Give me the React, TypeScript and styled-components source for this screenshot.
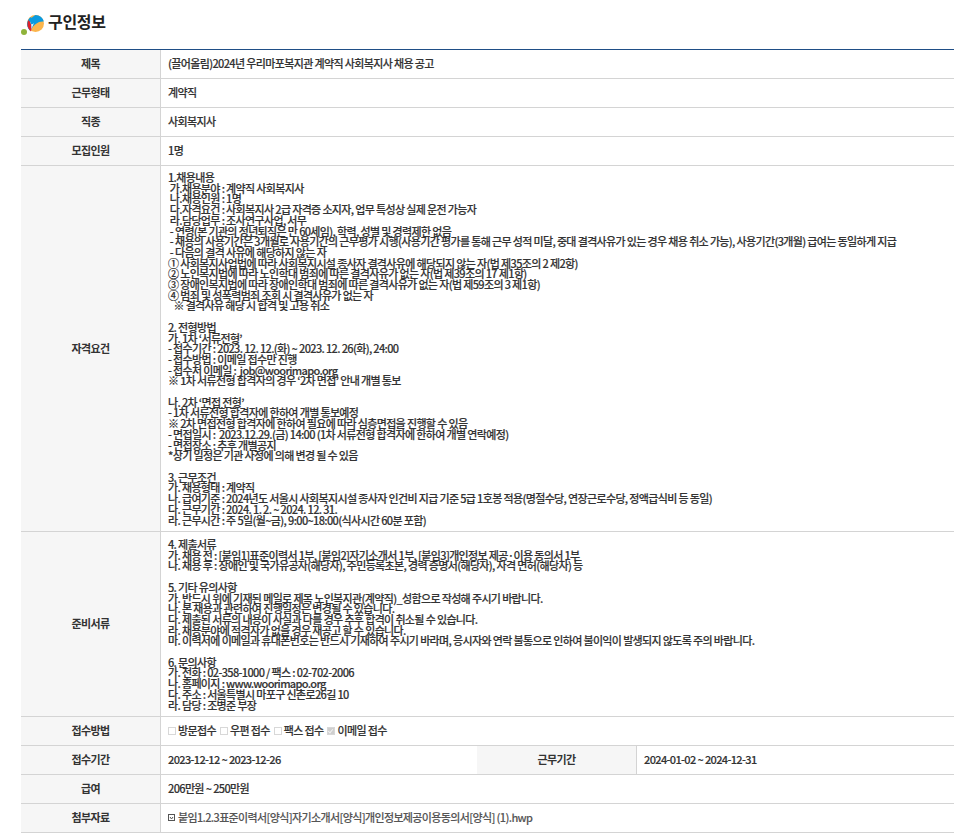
import React from 'react';
import styled, { createGlobalStyle } from 'styled-components';

const GlobalStyle = createGlobalStyle`
  html, body {
    margin: 0;
    padding: 0;
    background: #ffffff;
  }
  body {
    font-family: "Noto Sans CJK KR", "Noto Sans", sans-serif;
    color: #333333;
  }
`;

const Page = styled.div`
  width: 976px;
  height: 833px;
  overflow: hidden;
  padding: 0 22px 0 21px;
  box-sizing: border-box;
`;

const Heading = styled.div`
  display: flex;
  align-items: flex-start;
  gap: 4px;
  height: 49px;
  padding-top: 10px;
  box-sizing: border-box;
`;

const LogoMark = styled.svg`
  margin-top: 5px;
  flex-shrink: 0;
`;

const HeadingText = styled.h2`
  margin: 0;
  font-size: 16px;
  font-weight: 700;
  line-height: 22px;
  letter-spacing: -0.3px;
  color: #222222;
`;

const Row = styled.div<{ $top?: boolean }>`
  display: grid;
  grid-template-columns: 140px 1fr;
  border-bottom: 1px solid #d4d4d4;
  ${({ $top }) => $top && 'border-top: 1px solid #1f4e86;'}
`;

const SplitRow = styled.div`
  display: grid;
  grid-template-columns: 140px 316px 160px 1fr;
  border-bottom: 1px solid #d4d4d4;
`;

const Label = styled.div`
  display: flex;
  align-items: center;
  justify-content: center;
  padding-bottom: 2px;
  box-sizing: border-box;
  background: #f6f6f6;
  border-right: 1px solid #d4d4d4;
  font-size: 11px;
  font-weight: 700;
  letter-spacing: -0.64px;
  color: #333333;
`;

const Value = styled.div`
  display: flex;
  align-items: center;
  gap: 4px;
  height: 28px;
  padding: 0 0 2px 7px;
  box-sizing: border-box;
  font-size: 11px;
  font-weight: 500;
  letter-spacing: -0.64px;
  -webkit-text-stroke: 0.15px #333333;
  color: #333333;
  white-space: nowrap;
`;

const Body = styled.div<{ $height: number; $offset: number }>`
  height: ${({ $height }) => $height}px;
  padding: ${({ $offset }) => $offset}px 0 0 7px;
  box-sizing: border-box;
  font-size: 11px;
  font-weight: 500;
  line-height: 10.7px;
  letter-spacing: -0.65px;
  -webkit-text-stroke: 0.15px #333333;
  white-space: pre;
  color: #333333;
  overflow: hidden;
`;

const Check = styled.span<{ $on?: boolean }>`
  position: relative;
  display: inline-block;
  width: 8px;
  height: 8px;
  box-sizing: border-box;
  border: 1px solid #d8d8d8;
  background: ${({ $on }) => ($on ? '#cfcfcf' : '#ffffff')};
  margin: 1px -2px 0 0;
  ${({ $on }) =>
    $on &&
    `&::after {
      content: "";
      position: absolute;
      left: 1px;
      top: 0;
      width: 2px;
      height: 4px;
      border: solid #f2f2f2;
      border-width: 0 1px 1px 0;
      transform: rotate(40deg);
    }`}
`;

const FileGlyph = styled.svg`
  margin-right: -1px;
  flex-shrink: 0;
`;

const FileName = styled.span`
  color: #555555;
  -webkit-text-stroke: 0.1px #555555;
`;

const requirements = `1.채용내용
 가.채용분야 : 계약직 사회복지사
 나.채용인원 : 1명
 다.자격요건 : 사회복지사 2급 자격증 소지자, 업무 특성상 실제 운전 가능자
 라.담당업무 : 조사연구사업, 서무
 - 연령(본 기관의 정년퇴직은 만 60세임), 학력, 성별 및 경력제한 없음
 - 채용의 사용기간은 3개월로 사용기간의 근무평가 시행(사용기간 평가를 통해 근무 성적 미달, 중대 결격사유가 있는 경우 채용 취소 가능), 사용기간(3개월) 급여는 동일하게 지급
 - 다음의 결격 사유에 해당하지 않는 자
① 사회복지사업법에 따라 사회복지시설 종사자 결격사유에 해당되지 않는 자(법 제35조의 2 제2항)
② 노인복지법에 따라 노인학대 범죄에 따른 결격사유가 없는 자(법 제39조의 17 제1항)
③ 장애인복지법에 따라 장애인학대 범죄에 따른 결격사유가 없는 자(법 제59조의 3 제1항)
④ 범죄 및 성폭력범죄 조회 시 결격사유가 없는 자
   ※ 결격사유 해당 시 합격 및 고용 취소

2. 전형방법
가. 1차 ‘서류전형’
- 접수기간 : 2023. 12. 12.(화) ~ 2023. 12. 26(화), 24:00
- 접수방법 : 이메일 접수만 진행
- 접수처 이메일 :  job@woorimapo.org
※ 1차 서류전형 합격자의 경우 ‘2차 면접’ 안내 개별 통보

나. 2차 ‘면접 전형’
- 1차 서류전형 합격자에 한하여 개별 통보예정
※ 2차 면접전형 합격자에 한하여 필요에 따라 심층면접을 진행할 수 있음
- 면접일시 :  2023.12.29.(금) 14:00 (1차 서류전형 합격자에 한하여 개별 연락예정)
- 면접장소 : 추후 개별공지
*상기 일정은 기관 사정에 의해 변경 될 수 있음

3. 근무조건
가. 채용형태 : 계약직
나. 급여기준 : 2024년도 서울시 사회복지시설 종사자 인건비 지급 기준 5급 1호봉 적용(명절수당, 연장근로수당, 정액급식비 등 동일)
다. 근무기간 : 2024. 1. 2. ~ 2024. 12. 31.
라. 근무시간 : 주 5일(월~금), 9:00~18:00(식사시간 60분 포함)`;

const documents = `4. 제출서류
가. 채용 전 : [붙임1]표준이력서 1부, [붙임2]자기소개서 1부, [붙임3]개인정보 제공·이용 동의서 1부
나. 채용 후 : 장애인 및 국가유공자(해당자), 주민등록초본, 경력 증명서(해당자), 자격 면허(해당자) 등

5. 기타 유의사항
가. 반드시 위에 기재된 메일로 제목 노인복지관(계약직)_성함으로 작성해 주시기 바랍니다.
나. 본 채용과 관련하여 진행일정은 변경될 수 있습니다.
다. 제출된 서류의 내용이 사실과 다를 경우 추후 합격이 취소될 수 있습니다.
라. 채용분야에 적격자가 없을 경우 재공고 할 수 있습니다.
마. 이력서에 이메일과 휴대폰번호는 반드시 기재하여 주시기 바라며, 응시자와 연락 불통으로 인하여 불이익이 발생되지 않도록 주의 바랍니다.

6. 문의사항
가. 전화 : 02-358-1000 / 팩스 : 02-702-2006
나. 홈페이지 : www.woorimapo.org
다. 주소 : 서울특별시 마포구 신촌로26길 10
라. 담당 : 조병준 부장`;

const Logo = () => (
  <LogoMark width="23" height="20" viewBox="0 0 23 20">
    <circle cx="14.5" cy="8.5" r="8.5" fill="#fbb54c" />
    <path d="M9 15.5C6 12 5.5 5 14.5 0A8.5 8.5 0 0 1 22.8 6.5C17 6 13 9.5 9 15.5Z" fill="#0a9be0" />
    <path d="M10 2C5 5 5 12 9 15.5 11.5 12 13 10 13 8 12.5 6 11 4 10 2Z" fill="#0a9be0" />
    <path d="M7.5 5C5.5 9 6.5 13.5 10 16.5 11 13 10.5 8 7.5 5Z" fill="#e0202a" />
    <path d="M10 16.5C11 13 10.5 8 9 6.5 10 11 12 9 13 8 11.5 11 10.5 13.5 10 16.5Z" fill="#ffffff" />
    <circle cx="3" cy="17" r="3" fill="#8fb33a" />
  </LogoMark>
);

const FileIcon = () => (
  <FileGlyph width="7" height="7" viewBox="0 0 7 7" fill="none" stroke="#555555">
    <rect x="0.5" y="0.5" width="6" height="6" />
    <path d="M2 3l1.5 2L5 3" />
  </FileGlyph>
);

const App: React.FC = () => {
  return (
    <Page>
      <GlobalStyle />
      <Heading>
        <Logo />
        <HeadingText>구인정보</HeadingText>
      </Heading>
      <Row $top>
        <Label>제목</Label>
        <Value>(끌어올림)2024년 우리마포복지관 계약직 사회복지사 채용 공고</Value>
      </Row>
      <Row>
        <Label>근무형태</Label>
        <Value>계약직</Value>
      </Row>
      <Row>
        <Label>직종</Label>
        <Value>사회복지사</Value>
      </Row>
      <Row>
        <Label>모집인원</Label>
        <Value>1명</Value>
      </Row>
      <Row>
        <Label>자격요건</Label>
        <Body $height={365} $offset={6}>{requirements}</Body>
      </Row>
      <Row>
        <Label>준비서류</Label>
        <Body $height={184} $offset={7}>{documents}</Body>
      </Row>
      <Row>
        <Label>접수방법</Label>
        <Value>
          <Check /><span>방문접수</span>
          <Check /><span>우편 접수</span>
          <Check /><span>팩스 접수</span>
          <Check $on /><span>이메일 접수</span>
        </Value>
      </Row>
      <SplitRow>
        <Label>접수기간</Label>
        <Value>2023-12-12 ~ 2023-12-26</Value>
        <Label>근무기간</Label>
        <Value>2024-01-02 ~ 2024-12-31</Value>
      </SplitRow>
      <Row>
        <Label>급여</Label>
        <Value>206만원 ~ 250만원</Value>
      </Row>
      <Row>
        <Label>첨부자료</Label>
        <Value>
          <FileIcon />
          <FileName>붙임1.2.3표준이력서[양식]자기소개서[양식]개인정보제공이용동의서[양식] (1).hwp</FileName>
        </Value>
      </Row>
    </Page>
  );
};

export default App;
